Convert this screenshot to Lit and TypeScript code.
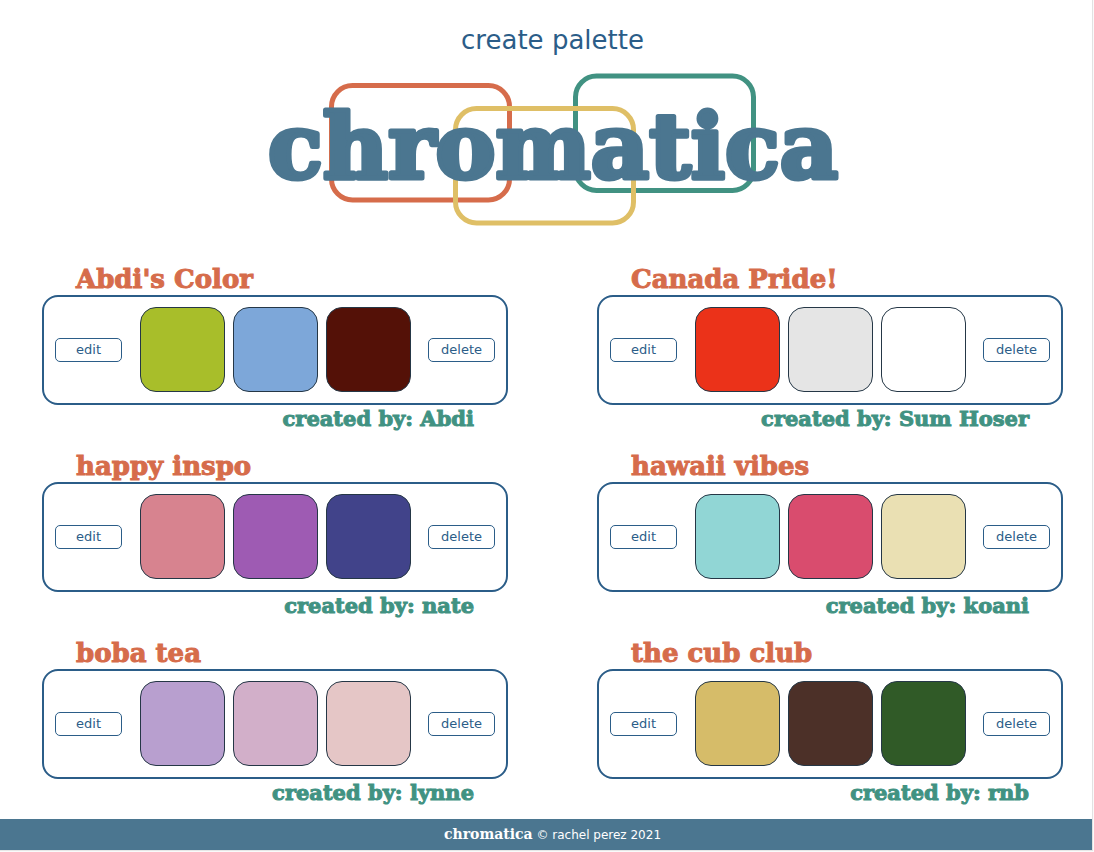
import { LitElement, html, css } from "lit";
import { customElement, property } from "lit/decorators.js";

interface Palette {
  name: string;
  author: string;
  colors: string[];
}

const PALETTES: Palette[] = [
  { name: "Abdi's Color", author: "Abdi", colors: ["#a8be2a", "#7da7d9", "#541107"] },
  { name: "Canada Pride!", author: "Sum Hoser", colors: ["#eb3219", "#e5e5e5", "#ffffff"] },
  { name: "happy inspo", author: "nate", colors: ["#d7838f", "#9e5bb3", "#41438a"] },
  { name: "hawaii vibes", author: "koani", colors: ["#91d6d5", "#d94c6e", "#eae0b3"] },
  { name: "boba tea", author: "lynne", colors: ["#b89fcf", "#d2afc9", "#e5c6c6"] },
  { name: "the cub club", author: "rnb", colors: ["#d6bc69", "#4c3028", "#305a27"] },
];

@customElement("chromatica-logo")
export class ChromaticaLogo extends LitElement {
  static styles = css`
    :host {
      display: block;
      width: 576px;
      max-width: 100%;
    }
    .logo {
      display: block;
      width: 100%;
      height: auto;
      overflow: visible;
    }
    .frame {
      fill: none;
      stroke-width: 5;
    }
    .red { stroke: #d66c4b; }
    .green { stroke: #419282; }
    .gold { stroke: #dfbf66; }
    .word {
      fill: #4b7690;
      stroke: #4b7690;
      stroke-width: 5;
      stroke-linejoin: round;
      font-family: "DejaVu Serif", serif;
      font-weight: 700;
      font-size: 90px;
    }
  `;

  render() {
    return html`
      <svg class="logo" viewBox="0 0 576 153" role="img" aria-label="chromatica">
        <rect class="frame red" x="66.5" y="12.5" width="178" height="114.5" rx="21" />
        <rect class="frame green" x="310.5" y="3" width="178" height="114.5" rx="21" />
        <rect class="frame gold" x="190.5" y="35.5" width="178" height="114.5" rx="21" />
        <text class="word" x="288" y="105" text-anchor="middle">chromatica</text>
      </svg>
    `;
  }
}

@customElement("palette-card")
export class PaletteCard extends LitElement {
  @property({ attribute: false }) palette!: Palette;

  static styles = css`
    :host {
      display: block;
      min-width: 0;
    }
    .title,
    .author {
      margin: 0;
      padding: 0 34px;
      font-family: "DejaVu Serif", serif;
      font-weight: 700;
      white-space: nowrap;
    }
    .title {
      color: #d66c4b;
      font-size: 26px;
      line-height: 32px;
      -webkit-text-stroke: 1px #d66c4b;
    }
    .author {
      color: #419282;
      font-size: 21px;
      line-height: 28px;
      text-align: right;
      -webkit-text-stroke: 1px #419282;
    }
    .box {
      display: flex;
      align-items: center;
      justify-content: space-between;
      padding: 10px 11px 11px;
      border: 2px solid #2b5d88;
      border-radius: 16px;
    }
    .swatches {
      display: flex;
      gap: 8px;
    }
    .swatch {
      box-sizing: border-box;
      width: 85px;
      height: 85px;
      border: 1px solid #253746;
      border-radius: 16px;
    }
    .action {
      box-sizing: border-box;
      width: 67px;
      height: 24px;
      padding: 0;
      border: 1px solid #2b5d88;
      border-radius: 5px;
      background: #fff;
      color: #2b5d88;
      font: 400 13px/20px "DejaVu Sans", sans-serif;
      cursor: pointer;
    }
  `;

  render() {
    const { name, author, colors } = this.palette;
    return html`
      <h2 class="title">${name}</h2>
      <div class="box">
        <button class="action" type="button">edit</button>
        <div class="swatches">
          ${colors.map((c) => html`<div class="swatch" style="background:${c}"></div>`)}
        </div>
        <button class="action" type="button">delete</button>
      </div>
      <p class="author">created by: ${author}</p>
    `;
  }
}

@customElement("app-root")
export class AppRoot extends LitElement {
  static styles = css`
    :host {
      display: block;
      min-height: 100vh;
      background: #fafafa;
      font-family: "DejaVu Sans", sans-serif;
    }
    .page {
      margin-right: 1px;
      border-right: 1px solid #e2e2e2;
      border-bottom: 1px solid #e6e6e6;
      background: #fff;
    }
    .header {
      display: flex;
      flex-direction: column;
      align-items: center;
      gap: 17px;
      padding: 24px 29px 0 42px;
    }
    .create {
      color: #2b5d88;
      font-size: 26px;
      line-height: 32px;
      text-decoration: none;
    }
    .grid {
      display: grid;
      grid-template-columns: 1fr 1fr;
      gap: 17px 89px;
      padding: 37px 29px 12px 42px;
    }
    .footer {
      padding: 0 29px 0 42px;
      background: #4b7690;
      color: #fff;
      font-size: 12px;
      line-height: 30px;
      text-align: center;
    }
    .brand {
      font-family: "DejaVu Serif", serif;
      font-size: 14px;
      font-weight: 700;
    }
  `;

  render() {
    return html`
      <div class="page">
        <header class="header">
          <a class="create" href="#create">create palette</a>
          <chromatica-logo></chromatica-logo>
        </header>
        <main class="grid">
          ${PALETTES.map((p) => html`<palette-card .palette=${p}></palette-card>`)}
        </main>
        <footer class="footer"><span class="brand">chromatica</span> © rachel perez 2021</footer>
      </div>
    `;
  }
}
